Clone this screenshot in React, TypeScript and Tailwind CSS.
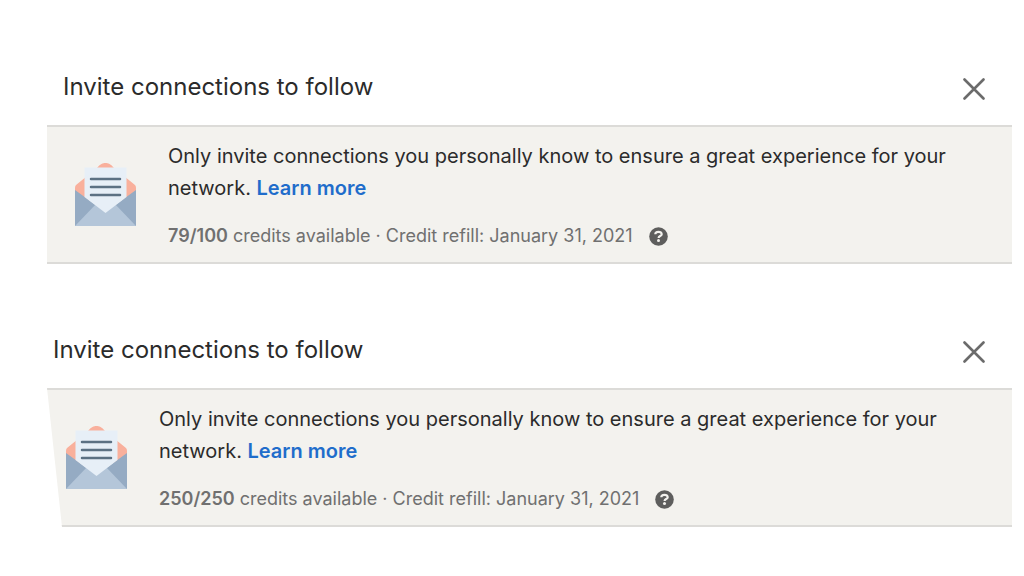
import clsx from "clsx";

type Invite = {
  id: string;
  credits: string;
  refill: string;
  // 左端を斜めに切り取ったカード
  slanted?: boolean;
};

const INVITES: Invite[] = [
  { id: "standard", credits: "79/100", refill: "January 31, 2021" },
  { id: "extended", credits: "250/250", refill: "January 31, 2021", slanted: true },
];

function EnvelopeIcon() {
  return (
    <svg viewBox="0 0 61 64" className="w-[61px] h-16 shrink-0" aria-hidden="true">
      <path d="M22 5C25 1 28 0 30.500 0S36 1 39 5L60 22q1 1 1 3v12H0V25q0-2 1-3Z" fill="#f9b09c" />
      <path d="M0 27 30.500 49 61 27V63H0Z" fill="#95abc3" />
      <path d="M0 63 22 40H39L61 63Z" fill="#b4c6d9" />
      <path d="M9.500 4.500H51.500V34L30.500 50 9.500 34Z" fill="#e7eff7" />
      <path d="M16 16H45M16 24H45M16 32H45" stroke="#5c7183" strokeWidth="2.500" strokeLinecap="round" />
    </svg>
  );
}

function CloseIcon() {
  return (
    <svg viewBox="0 0 22 22" className="h-[22px] w-[22px]" aria-hidden="true">
      <path d="M1.500 1.500 20.500 20.500M20.500 1.500 1.500 20.500" stroke="#6b6b6b" strokeWidth="2.600" strokeLinecap="round" />
    </svg>
  );
}

function HelpIcon() {
  return (
    <svg viewBox="0 0 19 19" className="h-[19px] w-[19px]" fill="none" aria-hidden="true">
      <circle cx="9.500" cy="9.500" r="9.300" fill="#5e5e5d" />
      <path d="M6.300 7.200C6.300 5.500 7.600 4.800 9.500 4.800s3.200.8 3.200 2.400c0 2-3.100 1.700-3.100 3.700" stroke="#f3f2ee" strokeWidth="2.200" />
      <circle cx="9.500" cy="13.500" r="1.500" fill="#f3f2ee" />
    </svg>
  );
}

function InviteCard({ credits, refill, slanted }: Invite) {
  return (
    <section>
      <header className={clsx("flex items-center justify-between pt-[23px] pr-[27px] pb-[22px]", slanted ? "pl-1.5" : "pl-4")}>
        <h2 className="text-[24px] leading-8 text-[#2b2b2b]">Invite connections to follow</h2>
        <button type="button" aria-label="Close" className="pt-1">
          <CloseIcon />
        </button>
      </header>
      <div
        className={clsx(
          "flex items-center gap-8 border-y-2 border-[#dcdbd8] bg-[#f3f2ee] pt-[13px] pr-12 pb-3",
          slanted ? "pl-[19px] [clip-path:polygon(0_0,100%_0,100%_100%,15px_100%)]" : "pl-7"
        )}
      >
        <EnvelopeIcon />
        <div>
          <p className="text-[20px] leading-8 text-[#2b2b2b]">
            Only invite connections you personally know to ensure a great experience for your network.{" "}
            <a href="#" className="font-semibold text-[#1f6dcb]">Learn more</a>
          </p>
          <div className="mt-[18px] flex items-center gap-4 text-[18px] leading-7 text-[#707070]">
            <p>
              <strong className="font-semibold">{credits}</strong> credits available · Credit refill: {refill}
            </p>
            <button type="button" aria-label="Help">
              <HelpIcon />
            </button>
          </div>
        </div>
      </div>
    </section>
  );
}

export default function App() {
  return (
    <main className="flex min-h-screen flex-col gap-[47px] bg-white pt-12 pr-3 pl-[47px] font-['Inter',sans-serif]">
      {INVITES.map((invite) => (
        <InviteCard key={invite.id} {...invite} />
      ))}
    </main>
  );
}
